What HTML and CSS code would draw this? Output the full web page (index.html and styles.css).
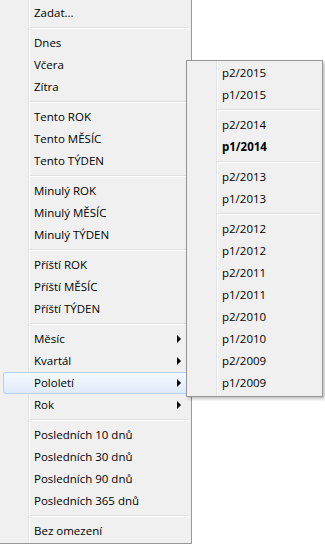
FILE: index.html
```html
<!DOCTYPE html>
<html>
<head>
    <link rel="stylesheet" href="styles.css">
</head>
<body>
    <div class="desk">
        <div class="menu main-menu">
            <div class="item">Zadat...</div>
            <div class="sep"></div>
            <div class="item">Dnes</div>
            <div class="item">Včera</div>
            <div class="item">Zítra</div>
            <div class="sep"></div>
            <div class="item">Tento ROK</div>
            <div class="item">Tento MĚSÍC</div>
            <div class="item">Tento TÝDEN</div>
            <div class="sep"></div>
            <div class="item">Minulý ROK</div>
            <div class="item">Minulý MĚSÍC</div>
            <div class="item">Minulý TÝDEN</div>
            <div class="sep"></div>
            <div class="item">Příští ROK</div>
            <div class="item">Příští MĚSÍC</div>
            <div class="item">Příští TÝDEN</div>
            <div class="sep"></div>
            <div class="item sub">Měsíc</div>
            <div class="item sub">Kvartál</div>
            <div class="item sub hot">Pololetí</div>
            <div class="item sub">Rok</div>
            <div class="sep"></div>
            <div class="item">Posledních 10 dnů</div>
            <div class="item">Posledních 30 dnů</div>
            <div class="item">Posledních 90 dnů</div>
            <div class="item">Posledních 365 dnů</div>
            <div class="sep"></div>
            <div class="item">Bez omezení</div>
        </div>

        <div class="menu sub-menu">
            <div class="item">p2/2015</div>
            <div class="item">p1/2015</div>
            <div class="sep"></div>
            <div class="item">p2/2014</div>
            <div class="item bold">p1/2014</div>
            <div class="sep"></div>
            <div class="item">p2/2013</div>
            <div class="item">p1/2013</div>
            <div class="sep"></div>
            <div class="item">p2/2012</div>
            <div class="item">p1/2012</div>
            <div class="item">p2/2011</div>
            <div class="item">p1/2011</div>
            <div class="item">p2/2010</div>
            <div class="item">p1/2010</div>
            <div class="item">p2/2009</div>
            <div class="item">p1/2009</div>
        </div>
    </div>
</body>
</html>
```

FILE: styles.css
```css
body {
    margin: 0;
    background: #fff;
    font-family: 'Open Sans', 'Noto Sans', sans-serif;
    font-size: 11.5px;
    color: #000;
}

.desk {
    position: relative;
    width: 325px;
    height: 545px;
}

/* menu panel with the win7 gutter line */
.menu {
    display: flex;
    flex-direction: column;
    box-sizing: border-box;
    background:
        linear-gradient(to right,
            transparent 28px,
            #e2e3e3 28px, #e2e3e3 29px,
            #ffffff 29px, #ffffff 30px,
            transparent 30px),
        #f0f0f0;
}

.main-menu {
    width: 192px;
    height: 544px;
    padding: 2px 2px 1px 0;
    border-right: 1px solid #979797;
    border-bottom: 1px solid #979797;
}

.sub-menu {
    position: absolute;
    left: 186px;
    top: 60px;
    width: 137px;
    height: 337px;
    padding: 1px 2px 1px 0;
    border: 1px solid #979797;
    box-shadow: 2px 2px 3px rgba(0, 0, 0, 0.25);
    background-position: 1px 0, 0 0;
}

.item {
    position: relative;
    height: 22px;
    line-height: 22px;
    padding-left: 34px;
    margin-left: 0;
    white-space: nowrap;
}

.sub-menu .item {
    padding-left: 35px;
}

.bold {
    font-weight: bold;
}

.sub::after {
    content: "";
    position: absolute;
    left: 177px;
    top: 7px;
    border-left: 4px solid #000;
    border-top: 4px solid transparent;
    border-bottom: 4px solid transparent;
}

.hot {
    margin-left: 3px;
    padding-left: 30px;
    border: 1px solid #b4cff0;
    border-radius: 3px;
    height: 20px;
    line-height: 20px;
    background: linear-gradient(#f5f9fe, #dfeaf9);
}

.hot::after {
    left: 173px;
    top: 6px;
}

.sep {
    height: 8px;
    margin-left: 30px;
    background: linear-gradient(
        transparent 3px,
        #e0e0e0 3px, #e0e0e0 4px,
        #ffffff 4px, #ffffff 5px,
        transparent 5px);
}
```
